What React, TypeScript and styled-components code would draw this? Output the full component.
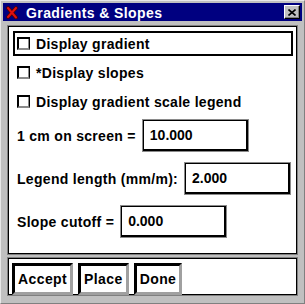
import React, { FC } from 'react';
import styled, { createGlobalStyle } from 'styled-components';

const GlobalStyle = createGlobalStyle`
  * {
    margin: 0;
    box-sizing: border-box;
  }
  body {
    background: #c0c0c0;
    font-family: "Liberation Sans", Arial, sans-serif;
  }
`;

const Window = styled.div`
  width: 305px;
  height: 304px;
  padding: 2px;
  background: #c0c0c0;
  border: 1px solid;
  border-color: #e8e8e8 #808080 #808080 #e8e8e8;

  display: flex;
  flex-direction: column;
`;

// Title bar ======================================================================================

const TitleBar = styled.div`
  height: 18px;
  background: #000080;
  padding: 0 2px 0 3px;

  display: flex;
  align-items: center;
`;

const TitleText = styled.span`
  flex: 1;
  margin-left: 8px;
  padding-top: 2px;
  color: #fff;
  font-weight: bold;
  font-size: 14px;
  letter-spacing: 0.4px;
  white-space: nowrap;
`;

const CloseButton = styled.div`
  width: 16px;
  height: 14px;
  background: #c0c0c0;
  border: 1px solid;
  border-color: #fff #000 #000 #fff;
  box-shadow: inset -1px -1px 0 #808080;

  display: flex;
  justify-content: center;
  align-items: center;
`;

const AppIcon: FC = () => (
  <svg width="12" height="13" viewBox="0 0 12 13">
    <path d="M2 2 L10 11.5 M10 2 L2 11" stroke="#500000" strokeWidth="3.6" strokeLinecap="round" fill="none" />
    <path d="M2 2 L10 11.5 M10 2 L2 11" stroke="#e01010" strokeWidth="2" strokeLinecap="round" fill="none" />
  </svg>
);

const CloseGlyph: FC = () => (
  <svg width="8" height="7" viewBox="0 0 8 7">
    <path d="M0.5 0.5 L7.5 6.5 M7.5 0.5 L0.5 6.5" stroke="#000" strokeWidth="1.6" fill="none" />
  </svg>
);

// Panels =========================================================================================

const Body = styled.div`
  flex: 1;
  padding: 4px 4px 0 4px;

  display: flex;
  flex-direction: column;
  gap: 2px;
`;

const Panel = styled.div<{ $height: number }>`
  height: ${(p) => p.$height}px;
  background: #fff;
  border: 1px solid #808080;
  box-shadow: inset 0 0 0 1px #000;
  padding: 1px;
`;

const OptionList = styled.div`
  padding: 4px 3px 0 4px;

  display: flex;
  flex-direction: column;
  gap: 4px;
`;

const OptionRow = styled.div<{ $focused?: boolean }>`
  height: 25px;
  padding-left: 2px;
  border: 2px solid ${(p) => (p.$focused ? '#000' : 'transparent')};

  display: flex;
  align-items: center;
  gap: 6px;
`;

const CheckBox = styled.span`
  width: 13px;
  height: 13px;
  background: #fff;
  border-style: solid;
  border-width: 2px 1px 2px 2px;
  border-color: #000 #000 #8a8a8a #000;
  box-shadow: inset -1px 0 0 #8a8a8a;
`;

const Label = styled.span`
  font-weight: bold;
  font-size: 14px;
  color: #000;
  letter-spacing: 0.3px;
  white-space: nowrap;
`;

const FieldList = styled.div`
  margin-top: 6px;
  padding-left: 8px;

  display: flex;
  flex-direction: column;
  gap: 12px;
`;

const FieldRow = styled.div`
  height: 31px;

  display: flex;
  align-items: center;
  gap: 7px;
`;

const InputBox = styled.div`
  width: 105px;
  height: 31px;
  padding-left: 6px;
  background: #fff;
  border-style: solid;
  border-width: 1px 2px 2px 1px;
  border-color: #000;
  box-shadow: 0 0 0 1px #8a8a8a;

  display: flex;
  align-items: center;
  font-weight: bold;
  font-size: 14px;
`;

const ButtonBar = styled.div`
  padding: 4px 0 0 3px;

  display: flex;
  gap: 5px;
`;

const ActionButton = styled.button`
  all: unset;
  height: 26px;
  padding: 0 3px;
  background: #fff;
  border: 3px solid;
  border-color: #000 #a0a0a0 #a0a0a0 #000;

  display: flex;
  align-items: center;
  font-family: "Liberation Sans", Arial, sans-serif;
  font-weight: bold;
  font-size: 14px;
  letter-spacing: 0.4px;
  color: #000;
`;

// Data ===========================================================================================

const options = [
  { label: 'Display gradient', focused: true },
  { label: '*Display slopes', focused: false },
  { label: 'Display gradient scale legend', focused: false },
];

const fields = [
  { label: '1 cm on screen =', value: '10.000' },
  { label: 'Legend length (mm/m):', value: '2.000' },
  { label: 'Slope cutoff =', value: '0.000' },
];

const buttons = ['Accept', 'Place', 'Done'];

const App: FC<{}> = () => (
  <>
    <GlobalStyle />
    <Window>
      <TitleBar>
        <AppIcon />
        <TitleText>Gradients &amp; Slopes</TitleText>
        <CloseButton>
          <CloseGlyph />
        </CloseButton>
      </TitleBar>
      <Body>
        <Panel $height={230}>
          <OptionList>
            {options.map((o) => (
              <OptionRow key={o.label} $focused={o.focused}>
                <CheckBox />
                <Label>{o.label}</Label>
              </OptionRow>
            ))}
          </OptionList>
          <FieldList>
            {fields.map((f) => (
              <FieldRow key={f.label}>
                <Label>{f.label}</Label>
                <InputBox>{f.value}</InputBox>
              </FieldRow>
            ))}
          </FieldList>
        </Panel>
        <Panel $height={39}>
          <ButtonBar>
            {buttons.map((b) => (
              <ActionButton key={b}>{b}</ActionButton>
            ))}
          </ButtonBar>
        </Panel>
      </Body>
    </Window>
  </>
);

export default App;
